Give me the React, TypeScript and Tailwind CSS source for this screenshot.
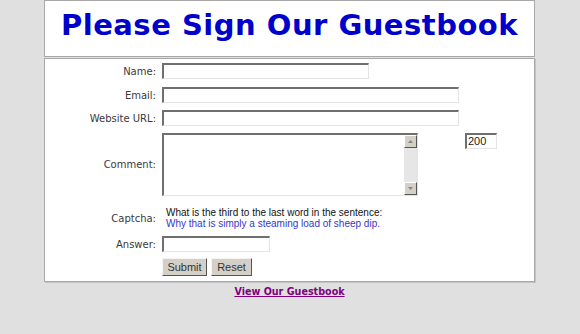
import React from "react";

const inset =
  "bg-white border-t-2 border-l-2 border-b border-r border-t-[#6f6f6f] border-l-[#6f6f6f] border-b-[#e4e4e4] border-r-[#e4e4e4]";

function Label({ children, className = "" }: { children: React.ReactNode; className?: string }) {
  return (
    <div className={`w-[111px] shrink-0 text-right text-[10px] leading-[13px] text-[#3a3a3a] ${className}`}>
      {children}
    </div>
  );
}

function ArrowBtn({ up }: { up?: boolean }) {
  return (
    <div className="w-[13px] h-[13px] bg-[#d4d0c8] border border-t-white border-l-white border-b-[#555] border-r-[#555] flex items-center justify-center">
      <svg width="5" height="3" viewBox="0 0 5 3">
        {up ? <path d="M0 3 L2.5 0 L5 3 Z" fill="#888" /> : <path d="M0 0 L2.5 3 L5 0 Z" fill="#888" />}
      </svg>
    </div>
  );
}

export default function App() {
  return (
    <div
      className="w-[580px] h-[334px] bg-[#e0e0e0] overflow-hidden"
      style={{ fontFamily: '"DejaVu Sans", Verdana, sans-serif' }}
    >
      <div className="w-[491px] ml-[44px]">
        <div className="h-[57px] bg-white border border-[#a8a8a8] flex justify-center pt-[7px]">
          <h1 className="text-[29px] leading-[34px] font-bold text-[#0000cc] tracking-[0.5px]">
            Please Sign Our Guestbook
          </h1>
        </div>
        <div className="mt-[1px] h-[224px] bg-white border border-[#a8a8a8] shadow-[1px_1px_0_#c4c4c4] pt-[4px]">
          <div className="flex items-center gap-[6px] h-[16px]">
            <Label>Name:</Label>
            <div className={`${inset} w-[207px] h-[16px]`} />
          </div>
          <div className="flex items-center gap-[6px] h-[16px] mt-[8px]">
            <Label>Email:</Label>
            <div className={`${inset} w-[297px] h-[16px]`} />
          </div>
          <div className="flex items-center gap-[6px] h-[16px] mt-[7px]">
            <Label>Website URL:</Label>
            <div className={`${inset} w-[297px] h-[16px]`} />
          </div>
          <div className="flex gap-[6px] h-[63px] mt-[7px]">
            <Label className="self-center">Comment:</Label>
            <div className={`${inset} w-[256px] h-[63px] flex justify-end`}>
              <div className="w-[13px] h-full bg-[#e6e6e6] flex flex-col justify-between">
                <ArrowBtn up />
                <ArrowBtn />
              </div>
            </div>
            <div
              className={`${inset} ml-[41px] w-[32px] h-[16px] text-[11px] leading-[13px] text-[#222] pl-[1px]`}
              style={{ fontFamily: '"Liberation Sans", Arial, sans-serif' }}
            >
              200
            </div>
          </div>
          <div className="flex items-center gap-[6px] mt-[9px] h-[26px]">
            <Label>Captcha:</Label>
            <div
              className="pl-[4px] text-[10px] leading-[11px]"
              style={{ fontFamily: '"Liberation Sans", Arial, sans-serif' }}
            >
              <div className="text-[#111]">What is the third to the last word in the sentence:</div>
              <div className="text-[#3636c8]">Why that is simply a steaming load of sheep dip.</div>
            </div>
          </div>
          <div className="flex items-center gap-[6px] h-[16px] mt-[5px]">
            <Label>Answer:</Label>
            <div className={`${inset} w-[108px] h-[16px]`} />
          </div>
          <div
            className="flex gap-[4px] ml-[117px] mt-[6px]"
            style={{ fontFamily: '"Liberation Sans", Arial, sans-serif' }}
          >
            <div className="w-[45px] h-[18px] bg-[#d4d0c8] border border-t-[#f4f4f4] border-l-[#f4f4f4] border-b-[#555] border-r-[#555] text-[11px] leading-[16px] text-center text-[#333]">
              Submit
            </div>
            <div className="w-[41px] h-[18px] bg-[#d4d0c8] border border-t-[#f4f4f4] border-l-[#f4f4f4] border-b-[#555] border-r-[#555] text-[11px] leading-[16px] text-center text-[#333]">
              Reset
            </div>
          </div>
        </div>
        <div className="text-center mt-[3px] text-[9.6px] leading-[14px]">
          <a className="font-bold text-[#800080] underline">View Our Guestbook</a>
        </div>
      </div>
    </div>
  );
}
